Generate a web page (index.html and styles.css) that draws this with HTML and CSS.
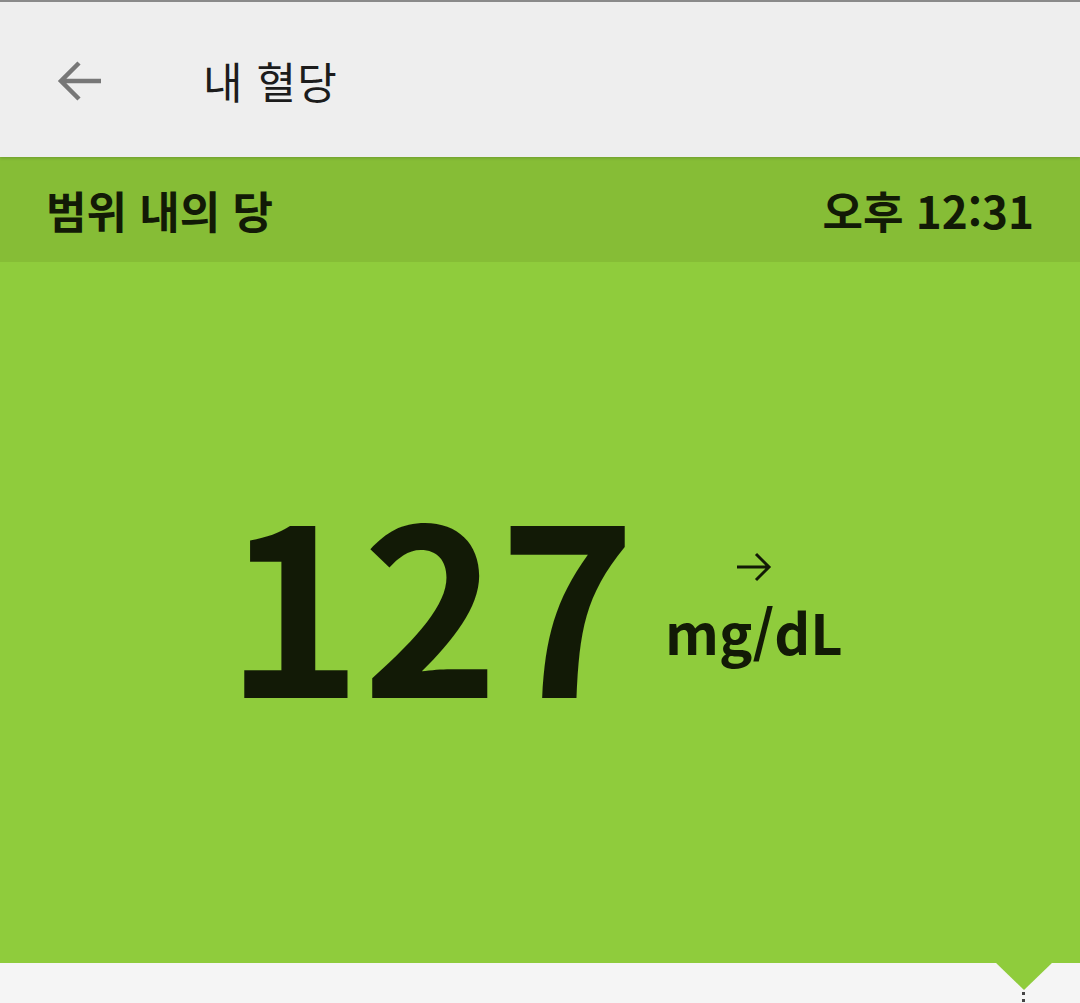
FILE: index.html
```html
<html lang="ko">
<head>
    <meta charset="UTF-8">
    <meta name="viewport" content="width=device-width, initial-scale=1.0">
    <title>내 혈당</title>
    <link rel="stylesheet" href="styles.css">
</head>
<body>
    <div class="app">
        <header class="topbar">
            <button class="back" aria-label="뒤로">
                <svg width="48" height="48" viewBox="0 0 48 48">
                    <path d="M46 24H6 M24 6L6 24L24 42" fill="none" stroke="#777" stroke-width="4.5"/>
                </svg>
            </button>
            <h1 class="title">내 혈당</h1>
        </header>
        <div class="status">
            <span class="status-label">범위 내의 당</span>
            <span class="status-time">오후 12:31</span>
        </div>
        <main class="reading">
            <span class="value">127</span>
            <div class="unit-box">
                <svg class="trend" width="38" height="32" viewBox="0 0 38 32">
                    <path d="M2 16H34 M21 3L34 16L21 29" fill="none" stroke="#121a06" stroke-width="3"/>
                </svg>
                <span class="unit">mg/dL</span>
            </div>
        </main>
        <footer class="bottom">
            <div class="marker"></div>
            <div class="dots"></div>
        </footer>
    </div>
</body>
</html>
```

FILE: styles.css
```css
body {
    margin: 0;
    font-family: "Noto Sans CJK KR", "Noto Sans", sans-serif;
    background: #f5f5f5;
}
.app {
    width: 1080px;
    height: 1003px;
    display: flex;
    flex-direction: column;
    overflow: hidden;
}
.topbar {
    height: 157px;
    border-top: 2px solid #8a8a8a;
    background: #eeeeee;
    display: flex;
    align-items: center;
    box-sizing: border-box;
    box-shadow: 0 1px 3px rgba(0, 0, 0, 0.18);
    position: relative;
    z-index: 1;
}
.back {
    border: none;
    background: none;
    padding: 0;
    margin-left: 55px;
    margin-top: 2px;
    width: 48px;
    height: 48px;
}
.title {
    margin: 0 0 0 100px;
    font-size: 43px;
    font-weight: 400;
    color: #1c1c1c;
    letter-spacing: 1px;
}
.status {
    height: 105px;
    background: #86bd36;
    display: flex;
    align-items: center;
    justify-content: space-between;
    padding: 0 46px 0 46px;
    color: #121a06;
    font-weight: 700;
}
.status-label,
.status-time {
    font-size: 44px;
}
.reading {
    flex: 1;
    background: #8fcc3c;
    display: flex;
    align-items: center;
    justify-content: center;
    color: #121a06;
    padding-right: 12px;
}
.value {
    font-size: 232px;
    font-weight: 700;
    line-height: 1;
    margin-top: -32px;
}
.unit-box {
    display: flex;
    flex-direction: column;
    align-items: center;
    margin-left: 29px;
    margin-top: -16px;
}
.trend {
    margin-bottom: 20px;
}
.unit {
    font-size: 56px;
    font-weight: 700;
    line-height: 1;
}
.bottom {
    height: 40px;
    background: #f5f5f5;
    position: relative;
}
.marker {
    position: absolute;
    left: 995px;
    top: -1px;
    width: 0;
    height: 0;
    border-left: 29px solid transparent;
    border-right: 29px solid transparent;
    border-top: 28px solid #8fcc3c;
}
.dots {
    position: absolute;
    left: 1022px;
    top: 29px;
    width: 3px;
    height: 12px;
    background: repeating-linear-gradient(#444 0 3px, transparent 3px 7px);
}
```
